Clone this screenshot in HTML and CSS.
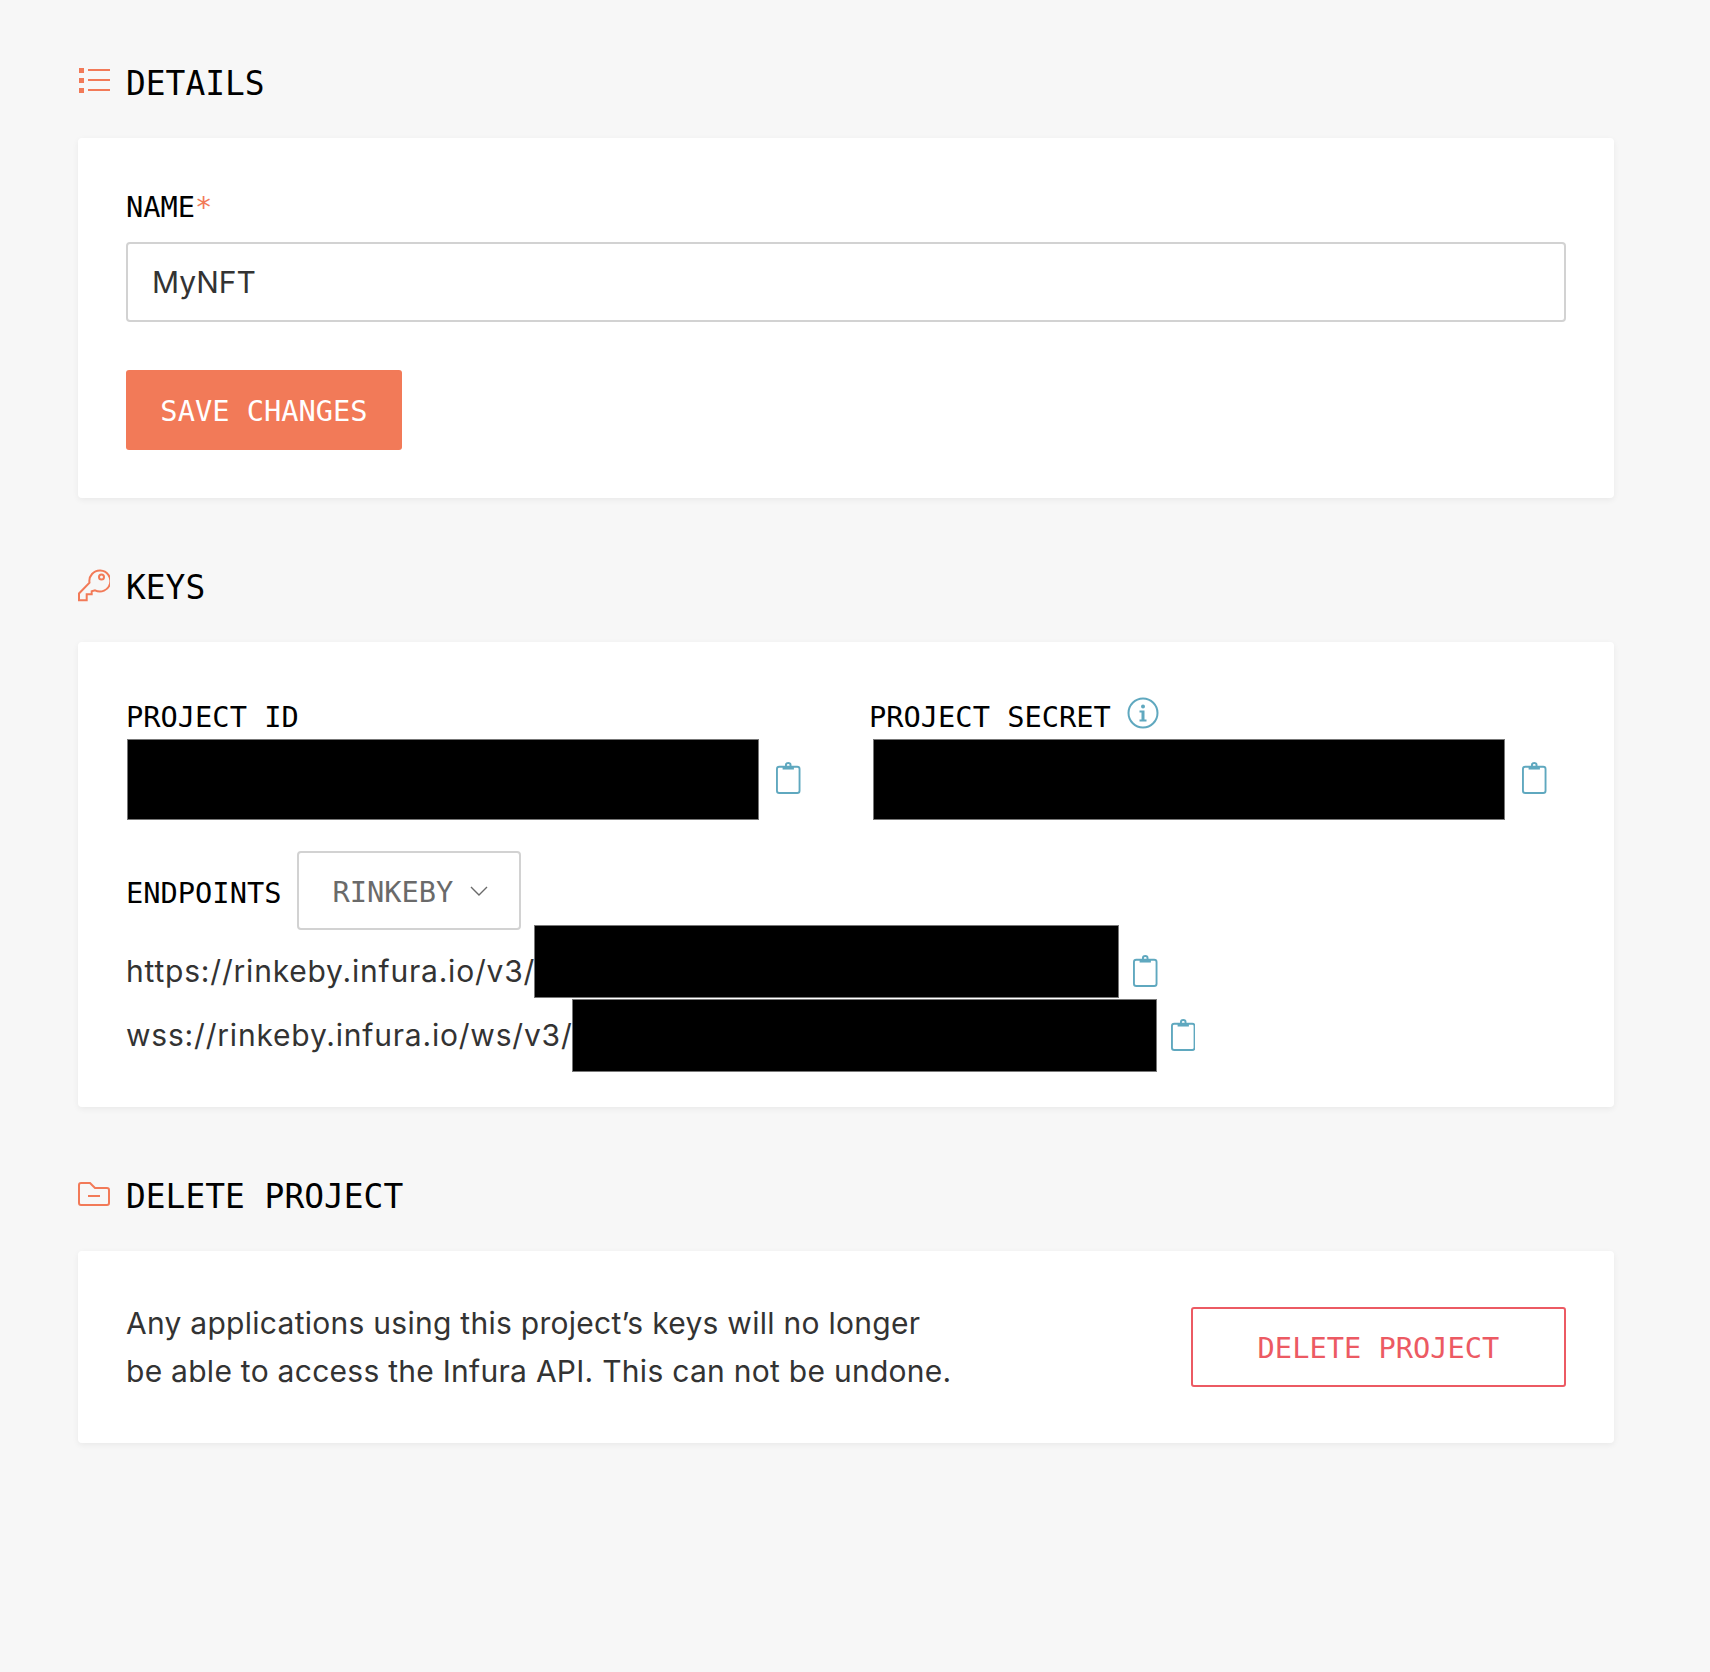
FILE: index.html
```html
<!DOCTYPE html>
<html lang="en">
<head>
<meta charset="utf-8">
<title>Project settings</title>
<link rel="stylesheet" href="styles.css">
</head>
<body>
<main class="page">
  <section class="section">
    <h2 class="head">
      <svg class="head-icon" viewBox="0 0 32 32" width="32" height="32"><g fill="#f27a58"><rect x="1" y="3" width="5" height="5"/><rect x="1" y="13" width="5" height="5"/><rect x="1" y="23" width="5" height="5"/><rect x="10" y="4" width="22" height="2"/><rect x="10" y="14" width="22" height="2"/><rect x="10" y="24" width="22" height="2"/></g></svg>
      <span class="head-text">DETAILS</span>
    </h2>
    <div class="card card-details">
      <label class="label">NAME<span class="req">*</span></label>
      <div class="input">MyNFT</div>
      <button class="btn btn-save">SAVE CHANGES</button>
    </div>
  </section>

  <section class="section">
    <h2 class="head">
      <svg class="head-icon" viewBox="0 0 32 36" width="32" height="36"><g fill="none" stroke="#f27a58" stroke-width="2"><path d="M11.5 15.7A10.5 10.5 0 1 1 17 23.3L13.7 24.3V27.3H8.7V33.3H1V26.5Z"/><circle cx="23.5" cy="10" r="2.5"/></g></svg>
      <span class="head-text">KEYS</span>
    </h2>
    <div class="card card-keys">
      <div class="keys-grid">
        <div class="key-col">
          <div class="label">PROJECT ID</div>
          <div class="key-value">
            <div class="redact redact-key"></div>
            <svg class="clip clip-key" viewBox="0 0 26 34"><use href="#clipboard"/></svg>
          </div>
        </div>
        <div class="key-col">
          <div class="label label-info">PROJECT SECRET
            <svg class="info" viewBox="0 0 32 32" width="32" height="32"><circle cx="16" cy="16" r="14.5" fill="none" stroke="#5fa8bf" stroke-width="2"/><g fill="#5fa8bf"><circle cx="16" cy="9.5" r="2"/><path d="M12.5 13.5H17.5V22.5H19.5V24.5H12.5V22.5H14.5V15.5H12.5Z"/></g></svg>
          </div>
          <div class="key-value key-value-secret">
            <div class="redact redact-key"></div>
            <svg class="clip clip-key" viewBox="0 0 26 34"><use href="#clipboard"/></svg>
          </div>
        </div>
      </div>
      <div class="endpoints">
        <span class="label">ENDPOINTS</span>
        <div class="select">
          <span class="select-text">RINKEBY</span>
          <svg viewBox="0 0 18 10" width="18" height="10"><path d="M1 1L9 9L17 1" fill="none" stroke="#6a6a6a" stroke-width="1.4"/></svg>
        </div>
      </div>
      <div class="url-row">
        <span class="url">https://rinkeby.infura.io/v3/</span>
        <div class="redact redact-url redact-url-first"></div>
        <svg class="clip" viewBox="0 0 26 34"><use href="#clipboard"/></svg>
      </div>
      <div class="url-row">
        <span class="url">wss://rinkeby.infura.io/ws/v3/</span>
        <div class="redact redact-url"></div>
        <svg class="clip" viewBox="0 0 26 34"><use href="#clipboard"/></svg>
      </div>
    </div>
  </section>

  <section class="section">
    <h2 class="head">
      <svg class="head-icon" viewBox="0 0 32 24" width="32" height="24"><g fill="none" stroke="#f27a58" stroke-width="2"><path d="M1 3A2 2 0 0 1 3 1H12L17 6H29A2 2 0 0 1 31 8V21A2 2 0 0 1 29 23H3A2 2 0 0 1 1 21Z"/><path d="M10 14H22"/></g></svg>
      <span class="head-text">DELETE PROJECT</span>
    </h2>
    <div class="card card-delete">
      <p class="warn">Any applications using this project’s keys will no longer<br>be able to access the Infura API. This can not be undone.</p>
      <button class="btn btn-delete">DELETE PROJECT</button>
    </div>
  </section>
</main>
<svg class="defs" width="0" height="0"><defs><g id="clipboard" fill="none" stroke="#5fa8bf" stroke-width="2"><rect x="1" y="5" width="24" height="28" rx="2.5"/><circle cx="13" cy="3.5" r="2.5"/><path d="M7 6.5H19" stroke-width="3"/></g></defs></svg>
</body>
</html>
```
FILE: styles.css
```css
* { box-sizing: border-box; }
html, body { margin: 0; }
body {
  background: #f7f7f7;
  min-height: 1672px;
  font-family: "DejaVu Sans Mono", monospace;
  color: #000;
}
.page { padding: 51px 96px 0 78px; }
.section { margin-bottom: 57px; }
.head {
  display: flex;
  align-items: center;
  gap: 16px;
  height: 60px;
  margin: 0 0 27px;
  font-size: 32.9px;
  font-weight: 400;
  white-space: pre;
}
.head-icon { flex: 0 0 32px; }
.head-text { padding-top: 4px; }
.card {
  background: #fff;
  border-radius: 4px;
  box-shadow: 0 2px 6px rgba(0, 0, 0, .06);
  padding: 0 48px;
}
.label {
  display: block;
  height: 30px;
  font-size: 28.7px;
  line-height: 34px;
  white-space: pre;
}
.req { color: #f27a58; }
.card-details { padding-top: 52px; padding-bottom: 48px; }
.input {
  height: 80px;
  margin: 22px 0 48px;
  padding: 0 24px;
  border: 2px solid #d2d2d2;
  border-radius: 4px;
  font: 400 30px/76px Inter, sans-serif;
  color: #333;
}
.btn {
  display: block;
  height: 80px;
  border-radius: 3px;
  font-family: "DejaVu Sans Mono", monospace;
  font-size: 28.7px;
  padding: 2px 0 0;
}
.btn-save {
  width: 276px;
  background: #f27a58;
  border: 0;
  color: #fff;
}
.card-keys { padding-top: 58px; padding-bottom: 40px; }
.keys-grid {
  display: grid;
  grid-template-columns: 743px 1fr;
}
.label-info { display: flex; align-items: flex-start; gap: 16px; }
.info { margin-top: -3px; flex: none; }
.key-value {
  display: flex;
  align-items: center;
  gap: 17px;
  margin: 9px 0 0 1px;
}
.key-value-secret { margin-left: 4px; }
.redact { background: #000; border: 1px solid #777; flex: none; }
.redact-key { width: 632px; height: 81px; }
.clip { width: 24.5px; height: 32px; flex: none; }
.clip-key { margin-top: -4px; }
.endpoints {
  display: flex;
  align-items: center;
  gap: 16px;
  margin-top: 31px;
}
.select {
  display: flex;
  align-items: center;
  gap: 17px;
  width: 224px;
  height: 79px;
  padding-left: 33px;
  border: 2px solid #d2d2d2;
  border-radius: 4px;
  font-size: 28.7px;
  color: #6a6a6a;
}
.select-text { padding-top: 2px; }
.url-row {
  display: flex;
  align-items: center;
  height: 64px;
}
.endpoints + .url-row { margin-top: 9px; }
.url {
  font: 400 30px/48px Inter, sans-serif;
  letter-spacing: .8px;
  color: #333;
  margin-right: -1px;
}
.redact-url { width: 585px; height: 73px; margin-right: 14px; }
.redact-url-first { position: relative; top: -10px; }
.card-delete {
  display: flex;
  align-items: center;
  justify-content: space-between;
  height: 192px;
}
.warn {
  margin: 0;
  font: 400 30px/48px Inter, sans-serif;
  letter-spacing: .27px;
  color: #333;
}
.btn-delete {
  width: 375px;
  background: #fff;
  border: 2px solid #ec5a63;
  color: #ec5a63;
}
.defs { position: absolute; }
```
